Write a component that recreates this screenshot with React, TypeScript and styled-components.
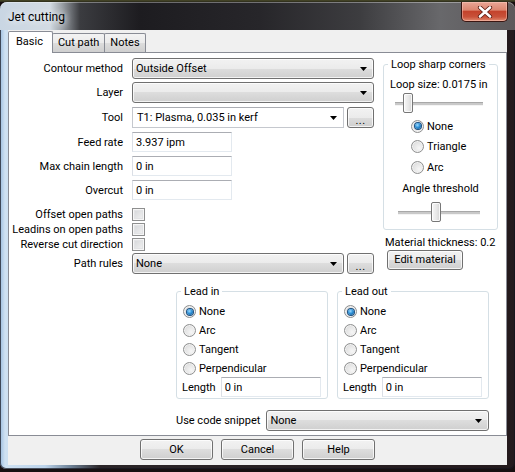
import React from "react";
import styled, { createGlobalStyle, css } from "styled-components";

const FONT = `Roboto, "Liberation Sans", Arial, sans-serif`;

const GlobalStyle = createGlobalStyle`
  html, body { margin: 0; padding: 0; background: #170f10; }
  body { font-family: ${FONT}; font-size: 11px; line-height: 15px; color: #000; }
  * { box-sizing: border-box; }
`;

const Screen = styled.div`
  width: 515px;
  height: 472px;
  overflow: hidden;
  padding-top: 2px;
  background: linear-gradient(180deg, #4a4a2a 0, #2a2a1a 2px, #170f10 2px);
`;

const Window = styled.div`
  width: 515px;
  height: 467px;
  border-radius: 7px 7px 6px 6px;
  padding: 0 8px 4px 8px;
  display: flex;
  flex-direction: column;
  background: linear-gradient(90deg, #9dbddf 0, #cfe1f2 5px, #bcd3ea 45px, #6f8398 70px, #2b2528 100px, #241a1d 515px);
  box-shadow: inset 0 0 0 1px rgba(20, 20, 30, 0.7);
`;

const TitleBar = styled.div`
  height: 28px;
  margin: 0 -8px;
  padding: 0 7px 0 8px;
  display: flex;
  align-items: flex-start;
  border-radius: 7px 7px 0 0;
  background: linear-gradient(90deg, #c9d6e3 0, #d3dbe3 50px, #9aa0a6 62px, #3b3c40 80px, #1d1c20 140px, #27262a 260px, #3d3d40 360px, #68686b 440px, #5d595b 515px);
  box-shadow: inset 0 1px 0 rgba(255, 255, 255, 0.35);
`;

const TitleText = styled.div`
  margin-top: 8px;
  font-size: 12px;
  line-height: 15px;
  color: #000;
  text-shadow: 0 0 6px #e8eef5, 0 0 10px rgba(255, 255, 255, 0.8);
`;

const CloseButton = styled.div`
  margin-left: auto;
  width: 47px;
  height: 20px;
  border: 1px solid #3a1612;
  border-top: none;
  border-radius: 0 0 5px 5px;
  display: flex;
  align-items: center;
  justify-content: center;
  background: linear-gradient(180deg, #e9a696 0, #dc8670 42%, #c4432c 50%, #c9523a 78%, #e08a6f 100%);
  box-shadow: inset 0 0 0 1px rgba(255, 210, 200, 0.45);
`;

const Client = styled.div`
  flex: 1;
  display: flex;
  flex-direction: column;
  background: #f0f0f0;
`;

const TabStrip = styled.div`
  height: 22px;
  display: flex;
  align-items: flex-end;
`;

const Tab = styled.div<{ $active?: boolean }>`
  height: 19px;
  padding: 0 5px;
  margin-left: -1px;
  border: 1px solid #898c95;
  border-bottom: none;
  border-radius: 2px 2px 0 0;
  line-height: 17px;
  white-space: nowrap;
  background: linear-gradient(180deg, #f3f3f3 0, #ebebeb 50%, #dddddd 50%, #cfcfcf 100%);
  ${(p) =>
    p.$active &&
    css`
      height: 22px;
      margin-left: 0;
      margin-bottom: -1px;
      padding: 0 9px 0 7px;
      line-height: 20px;
      background: #ffffff;
      position: relative;
      z-index: 1;
    `}
`;

const Panel = styled.div`
  height: 384px;
  border: 1px solid #898c95;
  background: #ffffff;
  display: flex;
  flex-direction: column;
`;

const TopSection = styled.div`
  display: flex;
  align-items: flex-start;
`;

const Form = styled.div`
  margin-top: 5px;
  display: flex;
  flex-direction: column;
`;

const FieldRow = styled.div<{ $h: number; $mb?: number }>`
  height: ${(p) => p.$h}px;
  margin-bottom: ${(p) => p.$mb ?? 0}px;
  display: grid;
  grid-template-columns: 114px auto;
  column-gap: 9px;
  align-items: center;
`;

const Label = styled.div`
  text-align: right;
  white-space: nowrap;
`;

const Controls = styled.div`
  display: flex;
  align-items: center;
  gap: 3px;
`;

const raised = css`
  border: 1px solid #707070;
  border-radius: 3px;
  background: linear-gradient(180deg, #f2f2f2 0, #ebebeb 50%, #dddddd 50%, #cfcfcf 100%);
  box-shadow: inset 0 0 0 1px rgba(255, 255, 255, 0.75);
`;

const DropList = styled.div<{ $w: number }>`
  ${raised}
  width: ${(p) => p.$w}px;
  height: 21px;
  padding: 0 6px 0 3px;
  display: flex;
  align-items: center;
  justify-content: space-between;
  white-space: nowrap;
`;

const Combo = styled.div<{ $w: number }>`
  width: ${(p) => p.$w}px;
  height: 21px;
  padding: 0 6px 0 4px;
  border: 1px solid #c5c8ce;
  border-top-color: #abadb3;
  background: #fff;
  display: flex;
  align-items: center;
  justify-content: space-between;
  white-space: nowrap;
`;

const TextBox = styled.div<{ $w: number }>`
  width: ${(p) => p.$w}px;
  height: 20px;
  padding: 0 3px;
  border: 1px solid #e3e9ef;
  border-top-color: #abadb3;
  border-left-color: #dbdfe6;
  background: #fff;
  display: flex;
  align-items: center;
  white-space: nowrap;
`;

const PushButton = styled.div<{ $w: number; $h?: number }>`
  ${raised}
  width: ${(p) => p.$w}px;
  height: ${(p) => p.$h ?? 21}px;
  display: flex;
  align-items: center;
  justify-content: center;
  white-space: nowrap;
`;

const Dots = styled.span`
  line-height: 1;
  margin-top: 5px;
  letter-spacing: 0.5px;
`;

const CheckBox = styled.span`
  width: 13px;
  height: 13px;
  border: 1px solid #8e8f8f;
  background: linear-gradient(135deg, #d2d4d7 0, #f4f4f4 100%);
  box-shadow: inset 0 0 0 1px #f6f6f6, inset 0 0 0 2px #e2e3e5;
`;

const RightColumn = styled.div`
  margin-left: 9px;
  margin-top: 4px;
  width: 115px;
  display: flex;
  flex-direction: column;
`;

const Group = styled.fieldset<{ $w: number; $pb: number }>`
  margin: 0;
  padding: 0 0 ${(p) => p.$pb}px 0;
  min-width: 0;
  width: ${(p) => p.$w}px;
  border: 1px solid #d5dfe5;
  border-radius: 3px;
  display: flex;
  flex-direction: column;
`;

const GroupTitle = styled.legend`
  margin-left: 4px;
  padding: 0 3px;
  line-height: 15px;
  white-space: nowrap;
`;

const Caption = styled.div<{ $mt: number; $ml?: number; $center?: boolean }>`
  margin-top: ${(p) => p.$mt}px;
  margin-left: ${(p) => p.$ml ?? 0}px;
  text-align: ${(p) => (p.$center ? "center" : "left")};
  white-space: nowrap;
`;

const SliderTrack = styled.div<{ $ml: number; $w: number; $mt: number }>`
  position: relative;
  height: 20px;
  margin-top: ${(p) => p.$mt}px;
  margin-left: ${(p) => p.$ml}px;
  width: ${(p) => p.$w}px;
  &::before {
    content: "";
    position: absolute;
    left: 0;
    right: 0;
    top: 9px;
    height: 2px;
    background: #c9c9c9;
    border-top: 1px solid #a8a8a8;
    box-shadow: 0 1px 0 #f4f4f4;
  }
`;

const SliderThumb = styled.div`
  position: absolute;
  top: 0;
  width: 10px;
  height: 20px;
  border: 1px solid #777;
  border-radius: 2px;
  background: linear-gradient(90deg, #f7f7f7 0, #e6e6e6 60%, #d4d4d4 100%);
  box-shadow: inset 0 0 0 1px rgba(255, 255, 255, 0.8);
`;

const RadioList = styled.div<{ $pl: number; $mt: number; $row: number }>`
  margin-top: ${(p) => p.$mt}px;
  padding-left: ${(p) => p.$pl}px;
  display: grid;
  grid-auto-rows: ${(p) => p.$row}px;
  align-items: center;
`;

const RadioRow = styled.div`
  display: flex;
  align-items: center;
  gap: 3px;
  white-space: nowrap;
`;

const RadioDot = styled.span<{ $on?: boolean }>`
  position: relative;
  flex-shrink: 0;
  width: 13px;
  height: 13px;
  border-radius: 50%;
  border: 1px solid #8e8f8f;
  background: radial-gradient(circle at 65% 65%, #f6f6f6 0, #e4e4e4 55%, #c9c9c9 100%);
  box-shadow: inset 0 0 0 1px #f2f2f2;
  ${(p) =>
    p.$on &&
    css`
      &::after {
        content: "";
        position: absolute;
        left: 2.5px;
        top: 2.5px;
        width: 6px;
        height: 6px;
        border-radius: 50%;
        background: radial-gradient(circle at 40% 35%, #9edaff 0, #2f92d8 45%, #0b4a86 100%);
        box-shadow: 0 0 0 1px #1b4f80;
      }
    `}
`;

const LowerSection = styled.div`
  margin-top: 10px;
  margin-left: 167px;
  width: 313px;
  display: flex;
  flex-direction: column;
`;

const LeadRow = styled.div`
  display: flex;
  gap: 9px;
`;

const LengthRow = styled.div`
  margin-top: -1px;
  padding-left: 5px;
  height: 20px;
  display: flex;
  align-items: center;
  gap: 5px;
`;

const SnippetRow = styled.div`
  margin-top: 11px;
  display: flex;
  justify-content: flex-end;
  align-items: center;
  gap: 6px;
`;

const Footer = styled.div`
  flex: 1;
  padding-top: 3px;
  display: flex;
  justify-content: center;
  gap: 8px;
`;

const Arrow = () => (
  <svg width="7" height="4" viewBox="0 0 7 4">
    <path d="M0 0H7L3.5 4Z" fill="#000" />
  </svg>
);

const CloseGlyph = () => (
  <svg width="16" height="12" viewBox="0 0 16 12">
    <path d="M3 1.5L13 10.5M13 1.5L3 10.5" stroke="#5a1a10" strokeWidth="4.2" strokeLinecap="round" />
    <path d="M3 1.5L13 10.5M13 1.5L3 10.5" stroke="#ffffff" strokeWidth="2.6" strokeLinecap="round" />
  </svg>
);

const Slider = ({ ml, w, mt, value }: { ml: number; w: number; mt: number; value: number }) => (
  <SliderTrack $ml={ml} $w={w} $mt={mt}>
    <SliderThumb style={{ left: Math.round(value * (w - 10)) }} />
  </SliderTrack>
);

const Radio = ({ label, on }: { label: string; on?: boolean }) => (
  <RadioRow>
    <RadioDot $on={on} />
    {label}
  </RadioRow>
);

const LeadGroup = ({ title }: { title: string }) => (
  <Group $w={153} $pb={1}>
    <GroupTitle>{title}</GroupTitle>
    <RadioList $pl={6} $mt={3} $row={19}>
      <Radio label="None" on />
      <Radio label="Arc" />
      <Radio label="Tangent" />
      <Radio label="Perpendicular" />
    </RadioList>
    <LengthRow>
      Length
      <TextBox $w={100}>0 in</TextBox>
    </LengthRow>
  </Group>
);

export default function App() {
  return (
    <>
      <GlobalStyle />
      <Screen>
        <Window>
          <TitleBar>
            <TitleText>Jet cutting</TitleText>
            <CloseButton>
              <CloseGlyph />
            </CloseButton>
          </TitleBar>
          <Client>
            <TabStrip>
              <Tab $active>Basic</Tab>
              <Tab>Cut path</Tab>
              <Tab>Notes</Tab>
            </TabStrip>
            <Panel>
              <TopSection>
                <Form>
                  <FieldRow $h={21} $mb={3}>
                    <Label>Contour method</Label>
                    <DropList $w={242}>
                      Outside Offset
                      <Arrow />
                    </DropList>
                  </FieldRow>
                  <FieldRow $h={21} $mb={4}>
                    <Label>Layer</Label>
                    <DropList $w={242}>
                      <span />
                      <Arrow />
                    </DropList>
                  </FieldRow>
                  <FieldRow $h={21} $mb={4}>
                    <Label>Tool</Label>
                    <Controls>
                      <Combo $w={212}>
                        T1: Plasma, 0.035 in kerf
                        <Arrow />
                      </Combo>
                      <PushButton $w={27}>
                        <Dots>...</Dots>
                      </PushButton>
                    </Controls>
                  </FieldRow>
                  <FieldRow $h={20} $mb={4}>
                    <Label>Feed rate</Label>
                    <TextBox $w={100}>3.937 ipm</TextBox>
                  </FieldRow>
                  <FieldRow $h={20} $mb={4}>
                    <Label>Max chain length</Label>
                    <TextBox $w={100}>0 in</TextBox>
                  </FieldRow>
                  <FieldRow $h={20} $mb={7}>
                    <Label>Overcut</Label>
                    <TextBox $w={100}>0 in</TextBox>
                  </FieldRow>
                  <FieldRow $h={13} $mb={2}>
                    <Label>Offset open paths</Label>
                    <CheckBox />
                  </FieldRow>
                  <FieldRow $h={13} $mb={2}>
                    <Label>Leadins on open paths</Label>
                    <CheckBox />
                  </FieldRow>
                  <FieldRow $h={13} $mb={3}>
                    <Label>Reverse cut direction</Label>
                    <CheckBox />
                  </FieldRow>
                  <FieldRow $h={21}>
                    <Label>Path rules</Label>
                    <Controls>
                      <DropList $w={212}>
                        None
                        <Arrow />
                      </DropList>
                      <PushButton $w={27}>
                        <Dots>...</Dots>
                      </PushButton>
                    </Controls>
                  </FieldRow>
                </Form>
                <RightColumn>
                  <Group $w={115} $pb={7}>
                    <GroupTitle>Loop sharp corners</GroupTitle>
                    <Caption $mt={5} $ml={6}>
                      Loop size: 0.0175 in
                    </Caption>
                    <Slider ml={11} w={88} mt={1} value={0.1} />
                    <RadioList $pl={27} $mt={3} $row={20.5}>
                      <Radio label="None" on />
                      <Radio label="Triangle" />
                      <Radio label="Arc" />
                    </RadioList>
                    <Caption $mt={3} $center>
                      Angle threshold
                    </Caption>
                    <Slider ml={14} w={82} mt={6} value={0.46} />
                  </Group>
                  <Caption $mt={5} $ml={2}>
                    Material thickness: 0.2
                  </Caption>
                  <Caption $mt={0} $ml={4}>
                    <PushButton $w={76} $h={20}>
                      Edit material
                    </PushButton>
                  </Caption>
                </RightColumn>
              </TopSection>
              <LowerSection>
                <LeadRow>
                  <LeadGroup title="Lead in" />
                  <LeadGroup title="Lead out" />
                </LeadRow>
                <SnippetRow>
                  <Label>Use code snippet</Label>
                  <DropList $w={228}>
                    None
                    <Arrow />
                  </DropList>
                </SnippetRow>
              </LowerSection>
            </Panel>
            <Footer>
              <PushButton $w={73}>OK</PushButton>
              <PushButton $w={73}>Cancel</PushButton>
              <PushButton $w={73}>Help</PushButton>
            </Footer>
          </Client>
        </Window>
      </Screen>
    </>
  );
}
